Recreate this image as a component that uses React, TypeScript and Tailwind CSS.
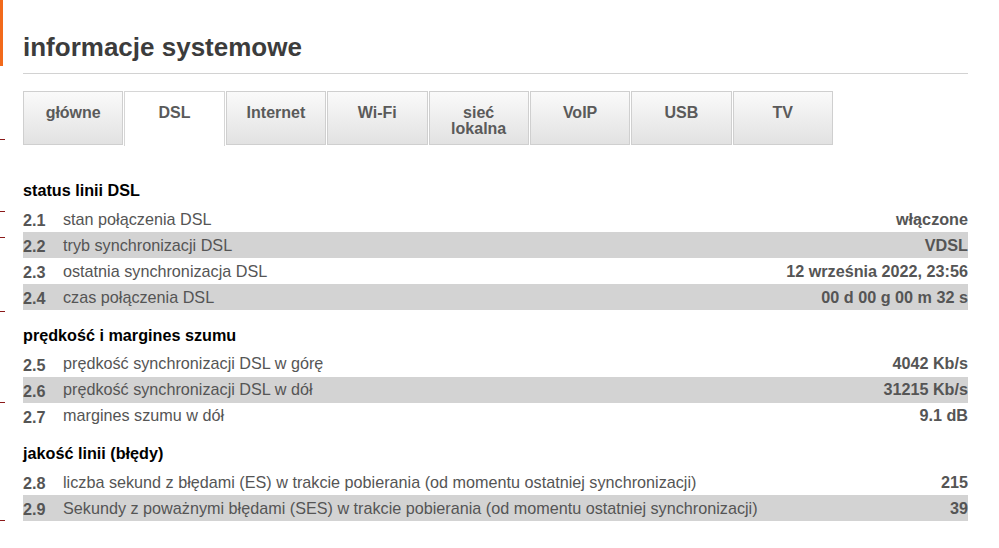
const TABS = ["główne", "DSL", "Internet", "Wi-Fi", "sieć\nlokalna", "VoIP", "USB", "TV"];

type Row = { id: string; label: string; value: string };
type Section = { title: string; rows: Row[] };

const SECTIONS: Section[] = [
  {
    title: "status linii DSL",
    rows: [
      { id: "2.1", label: "stan połączenia DSL", value: "włączone" },
      { id: "2.2", label: "tryb synchronizacji DSL", value: "VDSL" },
      { id: "2.3", label: "ostatnia synchronizacja DSL", value: "12 września 2022, 23:56" },
      { id: "2.4", label: "czas połączenia DSL", value: "00 d 00 g 00 m 32 s" },
    ],
  },
  {
    title: "prędkość i margines szumu",
    rows: [
      { id: "2.5", label: "prędkość synchronizacji DSL w górę", value: "4042 Kb/s" },
      { id: "2.6", label: "prędkość synchronizacji DSL w dół", value: "31215 Kb/s" },
      { id: "2.7", label: "margines szumu w dół", value: "9.1 dB" },
    ],
  },
  {
    title: "jakość linii (błędy)",
    rows: [
      {
        id: "2.8",
        label: "liczba sekund z błędami (ES) w trakcie pobierania (od momentu ostatniej synchronizacji)",
        value: "215",
      },
      {
        id: "2.9",
        label: "Sekundy z poważnymi błędami (SES) w trakcie pobierania (od momentu ostatniej synchronizacji)",
        value: "39",
      },
    ],
  },
];

const TICKS = [139, 211, 237, 311, 402, 520];

export default function App() {
  return (
    <div className="relative w-[999px] h-[548px] overflow-hidden bg-white font-['Liberation_Sans',Arial,sans-serif]">
      {/* left edge decorations */}
      <div className="absolute left-0 top-0 w-[3px] h-[66px] bg-[#f26a1b]" />
      {TICKS.map((y) => (
        <div key={y} className="absolute left-0 w-[5px] h-px bg-[#8b1a1a]" style={{ top: y }} />
      ))}

      <div className="pl-[23px] pr-[31px] pt-[32px]">
        <h1 className="text-[26px] leading-[30px] font-bold text-[#3c3c3c]">informacje systemowe</h1>
        <div className="mt-[11px] h-px bg-[#d2d2d2]" />

        {/* tabs */}
        <div className="mt-[17px] w-[810px] grid grid-cols-8 gap-px items-start">
          {TABS.map((t) => {
            const active = t === "DSL";
            return (
              <div
                key={t}
                className={
                  active
                    ? "h-[55px] border border-b-0 border-[#d6d6d6] bg-white flex justify-center pt-[13px]"
                    : "h-[54px] border border-[#cfcfcf] bg-gradient-to-b from-[#fafafa] to-[#e2e2e2] flex justify-center pt-[13px]"
                }
              >
                <span className="text-[16px] leading-[16px] font-bold text-[#5a5a5a] text-center whitespace-pre-line">
                  {t}
                </span>
              </div>
            );
          })}
        </div>

        {/* sections */}
        <div className="mt-[33px] flex flex-col gap-[13.5px]">
          {SECTIONS.map((s) => (
            <div key={s.title}>
              <h2 className="h-[27px] leading-[23px] text-[16.2px] font-bold text-black">{s.title}</h2>
              {s.rows.map((r, i) => (
                <div
                  key={r.id}
                  className={
                    "flex items-center h-[26px] text-[16.2px] text-[#555] " + (i % 2 === 1 ? "bg-[#d3d3d3]" : "")
                  }
                >
                  <span className="w-[40px] font-bold pt-[3px]">{r.id}</span>
                  <span className="flex-1">{r.label}</span>
                  <span className="font-bold">{r.value}</span>
                </div>
              ))}
            </div>
          ))}
        </div>
      </div>
    </div>
  );
}
